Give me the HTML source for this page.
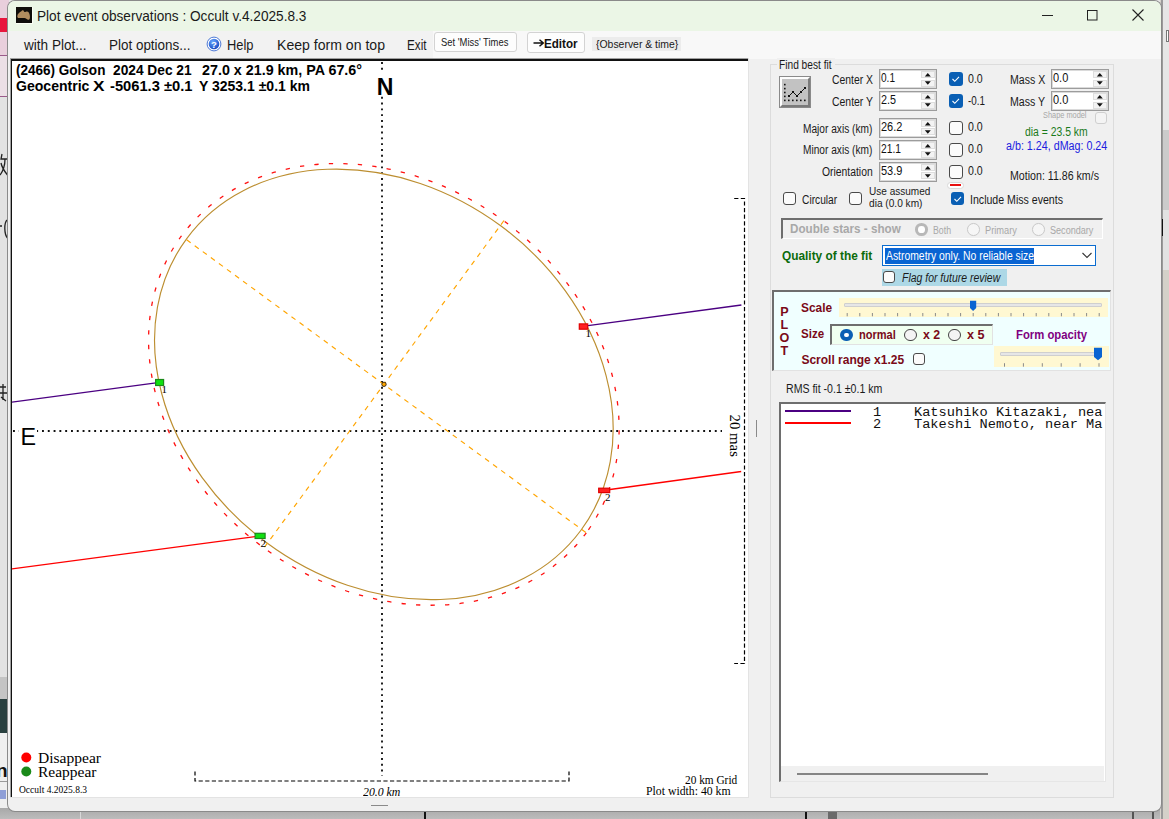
<!DOCTYPE html>
<html><head><meta charset="utf-8"><style>
html,body{margin:0;padding:0;width:1169px;height:819px;overflow:hidden;position:relative;font-family:"Liberation Sans",sans-serif}
.t{position:absolute;white-space:pre;line-height:1}
.r{position:absolute}
</style></head><body>
<div class="r" style="left:0px;top:0px;width:1169px;height:819px;background:#e6e6e6"></div>
<div class="r" style="left:0px;top:0px;width:9px;height:55px;background:#e9cfdc"></div>
<div class="r" style="left:0px;top:18px;width:8px;height:14px;background:#e8163c"></div>
<div class="r" style="left:0px;top:54.5px;width:9px;height:1.5px;background:#9a5a8a"></div>
<div class="r" style="left:0px;top:56px;width:9px;height:40px;background:#ecdfe6"></div>
<div class="r" style="left:0px;top:95.5px;width:9px;height:1.5px;background:#9a5a8a"></div>
<div class="r" style="left:0px;top:97px;width:9px;height:580px;background:#e2e2e2"></div>
<div class="r" style="left:0px;top:677px;width:9px;height:22px;background:#c4c4c4"></div>
<div class="r" style="left:0px;top:699px;width:9px;height:34px;background:#29403f"></div>
<div class="r" style="left:0px;top:733px;width:9px;height:80px;background:#efefef"></div>
<div class="t" id="t0" style="left:-4.00px;top:760.92px;font-family:'Liberation Sans', sans-serif;font-size:19px;font-weight:700;font-style:normal;color:#111;">n</div>
<div class="r" style="left:0px;top:781px;width:8px;height:1px;background:#9a9a9a"></div>
<div class="r" style="left:0px;top:790px;width:6px;height:9px;background:#3050c0;opacity:0.5"></div>
<div class="r" style="left:0px;top:808px;width:1169px;height:11px;background:linear-gradient(#a8a8a8,#bcbcbc)"></div>
<div class="r" style="left:80px;top:811px;width:1px;height:8px;background:#d8d8d8"></div>
<div class="r" style="left:424px;top:811px;width:1.5px;height:8px;background:#111"></div>
<div class="r" style="left:805px;top:811px;width:1.5px;height:8px;background:#111"></div>
<div class="r" style="left:828px;top:811px;width:9px;height:8px;background:#6a6a6a"></div>
<div class="r" style="left:1132px;top:811px;width:2px;height:8px;background:#555"></div>
<div class="r" style="left:1152px;top:811px;width:2px;height:8px;background:#555"></div>
<div class="r" style="left:1160px;top:0px;width:9px;height:819px;background:#d6d3cc"></div>
<div class="r" style="left:1161px;top:0px;width:2px;height:819px;background:#9a9a9a"></div>
<div class="r" style="left:1163px;top:0px;width:6px;height:130px;background:#e6e6e6"></div>
<div class="r" style="left:1163px;top:130px;width:6px;height:80px;background:#cbcbcb"></div>
<div class="r" style="left:1163px;top:210px;width:6px;height:60px;background:#e2e2e2"></div>
<div class="r" style="left:1163px;top:270px;width:6px;height:549px;background:#d4d1c9"></div>
<div class="r" style="left:1166px;top:30px;width:3px;height:12px;background:#fff;border:1px solid #777;box-sizing:border-box"></div>
<div class="r" style="left:1161.5px;top:219px;width:1.5px;height:17px;background:#111"></div>
<svg class="r" style="left:0;top:0" width="10" height="819"><g fill="none" stroke="#222" stroke-width="1.3"><path d="M2 154 L1 159 H7 M5 159 C5 165 3 171 0 175 M1 163 C2 168 5 172 7.5 175"/><path d="M0 226 H2 M7 220 C4 223 4 234 7.5 238"/><path d="M0 387 H6 M3 384 V400 M0 393 H7 M1 397 L6 401"/></g></svg>
<div class="r" style="left:8px;top:56px;width:1px;height:752px;background:#f4f4f4"></div>
<div class="r" style="left:9px;top:58px;width:1px;height:750px;background:#a4a4a4"></div>
<div class="r" style="left:8px;top:1px;width:1153px;height:810px;background:#f0f0f0;border-radius:7px;box-shadow:0 0 0 1px #8a8a8a;overflow:hidden">
<div class="r" style="left:0;top:0;width:1153px;height:30px;background:#ebf6e6"></div>
<div class="r" style="left:0;top:30px;width:1153px;height:28px;background:#f8f8f8"></div>
<div class="r" style="left:0;top:30px;width:425px;height:28px;background:#f2f2f2"></div>
</div>
<div class="r" style="left:15.5px;top:6.5px;width:17px;height:17px;background:#fbfff5"></div>
<div class="r" style="left:16.2px;top:7.1px;width:15.7px;height:15.7px;background:#0e0d0a"></div>
<svg class="r" style="left:16.2px;top:7.1px" width="16" height="16"><path d="M1.3 9.2 C1.3 6.8 3.8 5.2 5.4 4.2 C6 3 7.4 2.6 8 4.4 C8.6 5.2 9.6 5 10.6 4.6 C12.6 4.4 13.6 6.6 13.9 9 C14.1 11.2 13.6 13.3 12 12.7 C10.5 12.1 10 10.8 8 11 C6 11.2 4.5 10.7 3 11 C2 11.2 1.3 10.3 1.3 9.2Z" fill="#b08d5e"/></svg>
<div class="t" id="t1" style="left:37.00px;top:8.03px;font-family:'Liberation Sans', sans-serif;font-size:15.2px;font-weight:400;font-style:normal;color:#1a1a1a;transform:scaleX(0.8972);transform-origin:0 0;">Plot event observations : Occult v.4.2025.8.3</div>
<svg class="r" style="left:1030px;top:0" width="130" height="30"><line x1="12" y1="15.5" x2="23" y2="15.5" stroke="#222" stroke-width="1"/><rect x="57.5" y="10.5" width="9.5" height="9.5" fill="none" stroke="#222" stroke-width="1"/><path d="M102.5 9.5 L113.5 20.5 M113.5 9.5 L102.5 20.5" stroke="#222" stroke-width="1.1"/></svg>
<div class="t" id="t2" style="left:24.00px;top:37.74px;font-family:'Liberation Sans', sans-serif;font-size:14.6px;font-weight:400;font-style:normal;color:#1a1a1a;transform:scaleX(0.9298);transform-origin:0 0;">with Plot...</div>
<div class="t" id="t3" style="left:108.50px;top:37.74px;font-family:'Liberation Sans', sans-serif;font-size:14.6px;font-weight:400;font-style:normal;color:#1a1a1a;transform:scaleX(0.9216);transform-origin:0 0;">Plot options...</div>
<svg class="r" style="left:206px;top:36px" width="16" height="16"><defs><radialGradient id="hg" cx="40%" cy="30%" r="75%"><stop offset="0" stop-color="#6aa8ff"/><stop offset="1" stop-color="#1446c0"/></radialGradient></defs><circle cx="8" cy="8" r="6.9" fill="#fff" stroke="#3a6ad0" stroke-width="0.9"/><circle cx="8" cy="8" r="5.3" fill="url(#hg)"/><text x="8" y="11.6" font-family="Liberation Sans" font-size="9.5" font-weight="700" fill="#fff" text-anchor="middle">?</text></svg>
<div class="t" id="t4" style="left:226.50px;top:37.74px;font-family:'Liberation Sans', sans-serif;font-size:14.6px;font-weight:400;font-style:normal;color:#1a1a1a;transform:scaleX(0.8829);transform-origin:0 0;">Help</div>
<div class="t" id="t5" style="left:277.00px;top:37.74px;font-family:'Liberation Sans', sans-serif;font-size:14.6px;font-weight:400;font-style:normal;color:#1a1a1a;transform:scaleX(0.9646);transform-origin:0 0;">Keep form on top</div>
<div class="t" id="t6" style="left:406.70px;top:37.74px;font-family:'Liberation Sans', sans-serif;font-size:14.6px;font-weight:400;font-style:normal;color:#1a1a1a;transform:scaleX(0.8015);transform-origin:0 0;">Exit</div>
<div class="r" style="left:434px;top:32px;width:83px;height:20px;background:#fdfdfd;border:1px solid #d3d3d3;border-radius:3px;box-sizing:border-box"></div>
<div class="t" id="t7" style="left:441.00px;top:38.40px;font-family:'Liberation Sans', sans-serif;font-size:10.4px;font-weight:400;font-style:normal;color:#1a1a1a;transform:scaleX(0.9058);transform-origin:0 0;">Set 'Miss' Times</div>
<div class="r" style="left:527px;top:32px;width:58px;height:21px;background:#fdfdfd;border:1px solid #d3d3d3;border-radius:3px;box-sizing:border-box"></div>
<svg class="r" style="left:533px;top:38px" width="12" height="10"><path d="M0.5 5 H10 M6.5 1.8 L10.3 5 L6.5 8.2" fill="none" stroke="#111" stroke-width="1.5"/></svg>
<div class="t" id="t8" style="left:544.30px;top:37.67px;font-family:'Liberation Sans', sans-serif;font-size:12.2px;font-weight:700;font-style:normal;color:#111;transform:scaleX(0.9540);transform-origin:0 0;">Editor</div>
<div class="r" style="left:592px;top:37px;width:89px;height:14px;background:#ececec"></div>
<div class="t" id="t9" style="left:595.70px;top:39.47px;font-family:'Liberation Sans', sans-serif;font-size:11.5px;font-weight:400;font-style:normal;color:#1a1a1a;transform:scaleX(0.9067);transform-origin:0 0;">{Observer &amp; time}</div>
<div class="r" style="left:10px;top:58px;width:739px;height:740px;background:#fff;border-top:1px solid #a0a0a0;border-left:1px solid #a0a0a0;box-sizing:border-box"></div>
<div class="r" style="left:11px;top:59px;width:737px;height:2px;background:#111"></div>
<div class="r" style="left:11px;top:59px;width:1px;height:739px;background:#111"></div>
<div class="r" style="left:748px;top:58px;width:1px;height:740px;background:#e3e3e3"></div>
<div class="r" style="left:10px;top:797px;width:739px;height:1px;background:#e3e3e3"></div>
<svg class="r" style="left:0;top:0" width="1169" height="819">
<defs><clipPath id="pc"><rect x="12" y="61" width="736" height="736"/></clipPath></defs>
<g clip-path="url(#pc)">
<line x1="382" y1="62" x2="382" y2="776" stroke="#111" stroke-width="1.85" stroke-dasharray="1.9 3.9"/>
<line x1="13" y1="431" x2="722" y2="431" stroke="#111" stroke-width="1.85" stroke-dasharray="1.9 3.9"/>
<path d="M734.2 198.5 H744.5 V663.5 H734.2" fill="none" stroke="#000" stroke-width="1.2" stroke-dasharray="4.2 2.4"/>
<path d="M195 771.4 V781 H569 V771.4" fill="none" stroke="#000" stroke-width="1.2" stroke-dasharray="4.2 2.4"/>
<ellipse cx="383.85" cy="384.4" rx="251" ry="202.8" transform="rotate(36.25 383.85 384.4)" fill="none" stroke="#ff1010" stroke-width="1.3" stroke-dasharray="4.3 10.2"/>
<ellipse cx="383.85" cy="384.4" rx="245.2" ry="197" transform="rotate(36.5 383.85 384.4)" fill="none" stroke="#bc8e30" stroke-width="1.15"/>
<g stroke="#ffa500" stroke-width="1.15" stroke-dasharray="5 5"><line x1="186.64" y1="239.80" x2="585.95" y2="532.58"/><line x1="504.00" y1="220.53" x2="264.46" y2="547.22"/></g>
<line x1="12" y1="402.1" x2="156" y2="382.9" stroke="#4b0082" stroke-width="1.3"/>
<line x1="588" y1="325.6" x2="741.4" y2="305" stroke="#4b0082" stroke-width="1.3"/>
<line x1="12" y1="568.8" x2="255" y2="536.7" stroke="#ff0000" stroke-width="1.3"/>
<line x1="610" y1="489.5" x2="741.2" y2="471.5" stroke="#ff0000" stroke-width="1.3"/>
<rect x="155.6" y="379.5" width="8" height="6" fill="#10e010" stroke="#1a8a1a" stroke-width="1.2"/>
<rect x="255.1" y="533.3" width="10" height="5.2" fill="#10e010" stroke="#1a8a1a" stroke-width="1.2"/>
<rect x="579.3" y="323.9" width="8.4" height="5.3" fill="#ff2020" stroke="#e00000" stroke-width="1.2"/>
<rect x="598.7" y="488.2" width="11" height="4.4" fill="#ff2020" stroke="#e00000" stroke-width="1.2"/>
<text x="161.5" y="392.7" font-family="Liberation Serif" font-size="11" fill="#000">1</text>
<text x="585.5" y="337" font-family="Liberation Serif" font-size="11" fill="#000">1</text>
<text x="260.5" y="547" font-family="Liberation Serif" font-size="11" fill="#000">2</text>
<text x="605" y="501" font-family="Liberation Serif" font-size="11" fill="#000">2</text>
<circle cx="384" cy="384.3" r="2.2" fill="#ffa500" stroke="#111" stroke-width="0.8"/>
</g>
<rect x="375" y="71" width="20" height="25" fill="#fff"/>
<text x="0" y="0" transform="translate(376.8 94.8) scale(0.99 1)" font-family="Liberation Sans" font-weight="700" font-size="23.3" fill="#000">N</text>
<rect x="19" y="424" width="18" height="22" fill="#fff"/>
<text x="20.4" y="444.8" font-family="Liberation Sans" font-size="23.3" fill="#000">E</text>
<text transform="translate(726.5 414.6) rotate(90)" x="0" y="0" font-family="Liberation Serif" font-size="14.8" fill="#000" dominant-baseline="text-after-edge">20 mas</text>
<circle cx="26.3" cy="757.5" r="5" fill="#ff0000"/>
<circle cx="26.3" cy="771.5" r="5" fill="#1a8a1a"/>
</svg>
<div class="t" id="t10" style="left:15.60px;top:62.75px;font-family:'Liberation Sans', sans-serif;font-size:14px;font-weight:700;font-style:normal;color:#000;transform:scaleX(0.9655);transform-origin:0 0;">(2466) Golson</div>
<div class="t" id="t11" style="left:113.00px;top:62.75px;font-family:'Liberation Sans', sans-serif;font-size:14px;font-weight:700;font-style:normal;color:#000;transform:scaleX(0.9802);transform-origin:0 0;">2024 Dec 21</div>
<div class="t" id="t12" style="left:202.00px;top:62.75px;font-family:'Liberation Sans', sans-serif;font-size:14px;font-weight:700;font-style:normal;color:#000;transform:scaleX(1.0218);transform-origin:0 0;">27.0 x 21.9 km, PA 67.6°</div>
<div class="t" id="t13" style="left:15.60px;top:79.25px;font-family:'Liberation Sans', sans-serif;font-size:14px;font-weight:700;font-style:normal;color:#000;transform:scaleX(1.0035);transform-origin:0 0;">Geocentric</div>
<div class="t" id="t14" style="left:93.00px;top:79.25px;font-family:'Liberation Sans', sans-serif;font-size:14px;font-weight:700;font-style:normal;color:#000;transform:scaleX(1.2308);transform-origin:0 0;">X</div>
<div class="t" id="t15" style="left:110.00px;top:79.25px;font-family:'Liberation Sans', sans-serif;font-size:14px;font-weight:700;font-style:normal;color:#000;transform:scaleX(1.0505);transform-origin:0 0;">-5061.3 ±0.1</div>
<div class="t" id="t16" style="left:199.00px;top:79.25px;font-family:'Liberation Sans', sans-serif;font-size:14px;font-weight:700;font-style:normal;color:#000;">Y 3253.1 ±0.1 km</div>
<div class="t" id="t17" style="left:38.00px;top:750.66px;font-family:'Liberation Serif', serif;font-size:14.5px;font-weight:400;font-style:normal;color:#000;transform:scaleX(1.0718);transform-origin:0 0;">Disappear</div>
<div class="t" id="t18" style="left:38.00px;top:764.86px;font-family:'Liberation Serif', serif;font-size:14.5px;font-weight:400;font-style:normal;color:#000;transform:scaleX(1.0685);transform-origin:0 0;">Reappear</div>
<div class="t" id="t19" style="left:19.00px;top:786.04px;font-family:'Liberation Serif', serif;font-size:9.5px;font-weight:400;font-style:normal;color:#000;">Occult 4.2025.8.3</div>
<div class="t" id="t20" style="left:363.30px;top:784.51px;font-family:'Liberation Serif', serif;font-size:13px;font-weight:400;font-style:italic;color:#000;transform:scaleX(0.9084);transform-origin:0 0;">20.0 km</div>
<div class="t" id="t21" style="left:684.80px;top:774.45px;font-family:'Liberation Serif', serif;font-size:12px;font-weight:400;font-style:normal;color:#000;transform:scaleX(0.9432);transform-origin:0 0;">20 km Grid</div>
<div class="t" id="t22" style="left:645.80px;top:785.35px;font-family:'Liberation Serif', serif;font-size:12px;font-weight:400;font-style:normal;color:#000;transform:scaleX(0.9798);transform-origin:0 0;">Plot width: 40 km</div>
<div class="r" style="left:756px;top:420px;width:1px;height:17px;background:#8a8a8a"></div>
<div class="r" style="left:371px;top:805px;width:17px;height:1px;background:#8a8a8a"></div>
<div class="r" style="left:770px;top:64px;width:344px;height:734px;border:1px solid #dcdcdc;box-sizing:border-box"></div>
<div class="r" style="left:777px;top:58px;width:58px;height:10px;background:#f0f0f0"></div>
<div class="t" id="t23" style="left:779.40px;top:58.84px;font-family:'Liberation Sans', sans-serif;font-size:12px;font-weight:400;font-style:normal;color:#1a1a1a;transform:scaleX(0.8480);transform-origin:0 0;">Find best fit</div>
<div class="r" style="left:779.2px;top:76.1px;width:31.5px;height:31.5px;box-sizing:border-box;background:#c2c2c2;border:1px solid #8a8a8a"></div>
<div class="r" style="left:780.2px;top:77.1px;width:29.5px;height:29.5px;box-sizing:border-box;border-top:2.5px solid #fdfdfd;border-left:2.5px solid #fdfdfd;border-right:2.5px solid #7a7a7a;border-bottom:2.5px solid #7a7a7a"></div>
<svg class="r" style="left:0;top:0" width="1169" height="819"><g fill="#111"><rect x="784" y="83.8" width="1.6" height="1.6"/><rect x="784" y="87.8" width="1.6" height="1.6"/><rect x="784" y="91.7" width="1.6" height="1.6"/><rect x="784" y="95.6" width="1.6" height="1.6"/><rect x="784" y="99.6" width="1.6" height="1.6"/><rect x="788.0" y="99.6" width="1.6" height="1.6"/><rect x="792.0" y="99.6" width="1.6" height="1.6"/><rect x="796.0" y="99.6" width="1.6" height="1.6"/><rect x="800.0" y="99.6" width="1.6" height="1.6"/><rect x="804.0" y="99.6" width="1.6" height="1.6"/><rect x="788" y="95" width="2" height="2"/><rect x="792" y="91" width="2" height="2"/><rect x="796" y="95" width="2" height="2"/><rect x="800" y="91" width="2" height="2"/><rect x="804" y="87" width="2" height="2"/></g><path d="M789 96 L793 92 L797 96 L801 92 L805 88" fill="none" stroke="#111" stroke-width="1"/></svg>
<div class="t" id="t24" style="left:831.50px;top:74.14px;font-family:'Liberation Sans', sans-serif;font-size:12px;font-weight:400;font-style:normal;color:#1a1a1a;transform:scaleX(0.8657);transform-origin:0 0;">Center X</div>
<div class="t" id="t25" style="left:831.50px;top:96.04px;font-family:'Liberation Sans', sans-serif;font-size:12px;font-weight:400;font-style:normal;color:#1a1a1a;transform:scaleX(0.8697);transform-origin:0 0;">Center Y</div>
<div class="t" id="t26" style="left:803.20px;top:122.54px;font-family:'Liberation Sans', sans-serif;font-size:12px;font-weight:400;font-style:normal;color:#1a1a1a;transform:scaleX(0.8450);transform-origin:0 0;">Major axis (km)</div>
<div class="t" id="t27" style="left:803.20px;top:144.44px;font-family:'Liberation Sans', sans-serif;font-size:12px;font-weight:400;font-style:normal;color:#1a1a1a;transform:scaleX(0.8450);transform-origin:0 0;">Minor axis (km)</div>
<div class="t" id="t28" style="left:821.80px;top:165.94px;font-family:'Liberation Sans', sans-serif;font-size:12px;font-weight:400;font-style:normal;color:#1a1a1a;transform:scaleX(0.8637);transform-origin:0 0;">Orientation</div>
<div class="r" style="left:879px;top:69.2px;width:58px;height:19.5px;box-sizing:border-box;background:#fff;border:1px solid #9c9c9c;box-shadow:inset 0 0 0 1px #dadada"></div>
<div class="r" style="left:921px;top:71.2px;width:13.5px;height:7.3px;box-sizing:border-box;background:#f3f3f3;border:1px solid #dedede"></div>
<div class="r" style="left:921px;top:79.5px;width:13.5px;height:7px;box-sizing:border-box;background:#f3f3f3;border:1px solid #dedede"></div>
<svg class="r" style="left:921px;top:69.2px" width="14" height="19.5"><path d="M3.8 7.4 L9.8 7.4 L6.8 3.9Z M3.8 12.2 L9.8 12.2 L6.8 15.7Z" fill="#111"/></svg>
<div class="t" id="t29" style="left:881.00px;top:72.36px;font-family:'Liberation Sans', sans-serif;font-size:12.8px;font-weight:400;font-style:normal;color:#111;transform:scaleX(0.7867);transform-origin:0 0;">0.1</div>
<div class="r" style="left:879px;top:91.2px;width:58px;height:19.5px;box-sizing:border-box;background:#fff;border:1px solid #9c9c9c;box-shadow:inset 0 0 0 1px #dadada"></div>
<div class="r" style="left:921px;top:93.2px;width:13.5px;height:7.3px;box-sizing:border-box;background:#f3f3f3;border:1px solid #dedede"></div>
<div class="r" style="left:921px;top:101.5px;width:13.5px;height:7px;box-sizing:border-box;background:#f3f3f3;border:1px solid #dedede"></div>
<svg class="r" style="left:921px;top:91.2px" width="14" height="19.5"><path d="M3.8 7.4 L9.8 7.4 L6.8 3.9Z M3.8 12.2 L9.8 12.2 L6.8 15.7Z" fill="#111"/></svg>
<div class="t" id="t30" style="left:881.00px;top:94.36px;font-family:'Liberation Sans', sans-serif;font-size:12.8px;font-weight:400;font-style:normal;color:#111;transform:scaleX(0.8428);transform-origin:0 0;">2.5</div>
<div class="r" style="left:879px;top:118px;width:58px;height:19.5px;box-sizing:border-box;background:#fff;border:1px solid #9c9c9c;box-shadow:inset 0 0 0 1px #dadada"></div>
<div class="r" style="left:921px;top:120px;width:13.5px;height:7.3px;box-sizing:border-box;background:#f3f3f3;border:1px solid #dedede"></div>
<div class="r" style="left:921px;top:128.3px;width:13.5px;height:7px;box-sizing:border-box;background:#f3f3f3;border:1px solid #dedede"></div>
<svg class="r" style="left:921px;top:118px" width="14" height="19.5"><path d="M3.8 7.4 L9.8 7.4 L6.8 3.9Z M3.8 12.2 L9.8 12.2 L6.8 15.7Z" fill="#111"/></svg>
<div class="t" id="t31" style="left:881.00px;top:121.16px;font-family:'Liberation Sans', sans-serif;font-size:12.8px;font-weight:400;font-style:normal;color:#111;transform:scaleX(0.8587);transform-origin:0 0;">26.2</div>
<div class="r" style="left:879px;top:140.2px;width:58px;height:19.5px;box-sizing:border-box;background:#fff;border:1px solid #9c9c9c;box-shadow:inset 0 0 0 1px #dadada"></div>
<div class="r" style="left:921px;top:142.2px;width:13.5px;height:7.3px;box-sizing:border-box;background:#f3f3f3;border:1px solid #dedede"></div>
<div class="r" style="left:921px;top:150.5px;width:13.5px;height:7px;box-sizing:border-box;background:#f3f3f3;border:1px solid #dedede"></div>
<svg class="r" style="left:921px;top:140.2px" width="14" height="19.5"><path d="M3.8 7.4 L9.8 7.4 L6.8 3.9Z M3.8 12.2 L9.8 12.2 L6.8 15.7Z" fill="#111"/></svg>
<div class="t" id="t32" style="left:881.00px;top:143.36px;font-family:'Liberation Sans', sans-serif;font-size:12.8px;font-weight:400;font-style:normal;color:#111;transform:scaleX(0.8025);transform-origin:0 0;">21.1</div>
<div class="r" style="left:879px;top:162px;width:58px;height:19.5px;box-sizing:border-box;background:#fff;border:1px solid #9c9c9c;box-shadow:inset 0 0 0 1px #dadada"></div>
<div class="r" style="left:921px;top:164px;width:13.5px;height:7.3px;box-sizing:border-box;background:#f3f3f3;border:1px solid #dedede"></div>
<div class="r" style="left:921px;top:172.3px;width:13.5px;height:7px;box-sizing:border-box;background:#f3f3f3;border:1px solid #dedede"></div>
<svg class="r" style="left:921px;top:162px" width="14" height="19.5"><path d="M3.8 7.4 L9.8 7.4 L6.8 3.9Z M3.8 12.2 L9.8 12.2 L6.8 15.7Z" fill="#111"/></svg>
<div class="t" id="t33" style="left:881.00px;top:165.16px;font-family:'Liberation Sans', sans-serif;font-size:12.8px;font-weight:400;font-style:normal;color:#111;transform:scaleX(0.8587);transform-origin:0 0;">53.9</div>
<div class="r" style="left:949px;top:72px;width:13.5px;height:13.5px;box-sizing:border-box;background:#0a5fb4;border-radius:3px"></div>
<svg class="r" style="left:949px;top:72px" width="13.5" height="13.5"><path d="M3.5 7 L5.8 9.3 L10 4.8" fill="none" stroke="#fff" stroke-width="1.1"/></svg>
<div class="r" style="left:949px;top:94px;width:13.5px;height:13.5px;box-sizing:border-box;background:#0a5fb4;border-radius:3px"></div>
<svg class="r" style="left:949px;top:94px" width="13.5" height="13.5"><path d="M3.5 7 L5.8 9.3 L10 4.8" fill="none" stroke="#fff" stroke-width="1.1"/></svg>
<div class="r" style="left:949px;top:121px;width:13.5px;height:13.5px;box-sizing:border-box;background:#fbfbfb;border:1px solid #4a4a4a;border-radius:3px"></div>
<div class="r" style="left:949px;top:143px;width:13.5px;height:13.5px;box-sizing:border-box;background:#fbfbfb;border:1px solid #4a4a4a;border-radius:3px"></div>
<div class="r" style="left:949px;top:165px;width:13.5px;height:13.5px;box-sizing:border-box;background:#fbfbfb;border:1px solid #4a4a4a;border-radius:3px"></div>
<div class="t" id="t34" style="left:968.00px;top:72.82px;font-family:'Liberation Sans', sans-serif;font-size:12.5px;font-weight:400;font-style:normal;color:#1a1a1a;transform:scaleX(0.8453);transform-origin:0 0;">0.0</div>
<div class="t" id="t35" style="left:968.00px;top:94.62px;font-family:'Liberation Sans', sans-serif;font-size:12.5px;font-weight:400;font-style:normal;color:#1a1a1a;transform:scaleX(0.7890);transform-origin:0 0;">-0.1</div>
<div class="t" id="t36" style="left:968.00px;top:121.22px;font-family:'Liberation Sans', sans-serif;font-size:12.5px;font-weight:400;font-style:normal;color:#1a1a1a;transform:scaleX(0.8453);transform-origin:0 0;">0.0</div>
<div class="t" id="t37" style="left:968.00px;top:143.32px;font-family:'Liberation Sans', sans-serif;font-size:12.5px;font-weight:400;font-style:normal;color:#1a1a1a;transform:scaleX(0.8453);transform-origin:0 0;">0.0</div>
<div class="t" id="t38" style="left:968.00px;top:165.32px;font-family:'Liberation Sans', sans-serif;font-size:12.5px;font-weight:400;font-style:normal;color:#1a1a1a;transform:scaleX(0.8453);transform-origin:0 0;">0.0</div>
<div class="r" style="left:947px;top:182px;width:17px;height:6.5px;box-sizing:border-box;background:#fff;border:1px solid #d8d8d8;border-radius:4px"></div>
<div class="r" style="left:950px;top:184.3px;width:11px;height:2px;background:#e81010"></div>
<div class="t" id="t39" style="left:1010.00px;top:74.24px;font-family:'Liberation Sans', sans-serif;font-size:12px;font-weight:400;font-style:normal;color:#1a1a1a;transform:scaleX(0.8797);transform-origin:0 0;">Mass X</div>
<div class="t" id="t40" style="left:1010.00px;top:96.14px;font-family:'Liberation Sans', sans-serif;font-size:12px;font-weight:400;font-style:normal;color:#1a1a1a;transform:scaleX(0.8845);transform-origin:0 0;">Mass Y</div>
<div class="r" style="left:1051px;top:69.2px;width:58px;height:19.5px;box-sizing:border-box;background:#fff;border:1px solid #9c9c9c;box-shadow:inset 0 0 0 1px #dadada"></div>
<div class="r" style="left:1093px;top:71.2px;width:13.5px;height:7.3px;box-sizing:border-box;background:#f3f3f3;border:1px solid #dedede"></div>
<div class="r" style="left:1093px;top:79.5px;width:13.5px;height:7px;box-sizing:border-box;background:#f3f3f3;border:1px solid #dedede"></div>
<svg class="r" style="left:1093px;top:69.2px" width="14" height="19.5"><path d="M3.8 7.4 L9.8 7.4 L6.8 3.9Z M3.8 12.2 L9.8 12.2 L6.8 15.7Z" fill="#111"/></svg>
<div class="t" id="t41" style="left:1053.00px;top:72.36px;font-family:'Liberation Sans', sans-serif;font-size:12.8px;font-weight:400;font-style:normal;color:#111;transform:scaleX(0.8597);transform-origin:0 0;">0.0</div>
<div class="r" style="left:1051px;top:91.2px;width:58px;height:19.5px;box-sizing:border-box;background:#fff;border:1px solid #9c9c9c;box-shadow:inset 0 0 0 1px #dadada"></div>
<div class="r" style="left:1093px;top:93.2px;width:13.5px;height:7.3px;box-sizing:border-box;background:#f3f3f3;border:1px solid #dedede"></div>
<div class="r" style="left:1093px;top:101.5px;width:13.5px;height:7px;box-sizing:border-box;background:#f3f3f3;border:1px solid #dedede"></div>
<svg class="r" style="left:1093px;top:91.2px" width="14" height="19.5"><path d="M3.8 7.4 L9.8 7.4 L6.8 3.9Z M3.8 12.2 L9.8 12.2 L6.8 15.7Z" fill="#111"/></svg>
<div class="t" id="t42" style="left:1053.00px;top:94.36px;font-family:'Liberation Sans', sans-serif;font-size:12.8px;font-weight:400;font-style:normal;color:#111;transform:scaleX(0.8597);transform-origin:0 0;">0.0</div>
<div class="t" id="t43" style="left:1043.00px;top:111.38px;font-family:'Liberation Sans', sans-serif;font-size:9px;font-weight:400;font-style:normal;color:#a8a8a8;transform:scaleX(0.8200);transform-origin:0 0;">Shape model</div>
<div class="r" style="left:1094.5px;top:112px;width:12px;height:12px;box-sizing:border-box;border:1px solid #cfcfcf;border-radius:3px;background:#f4f4f4"></div>
<div class="t" id="t44" style="left:1025.20px;top:126.14px;font-family:'Liberation Sans', sans-serif;font-size:12px;font-weight:400;font-style:normal;color:#1a7a1a;transform:scaleX(0.8663);transform-origin:0 0;">dia = 23.5 km</div>
<div class="t" id="t45" style="left:1006.20px;top:140.34px;font-family:'Liberation Sans', sans-serif;font-size:12px;font-weight:400;font-style:normal;color:#2020e0;transform:scaleX(0.8931);transform-origin:0 0;">a/b: 1.24, dMag: 0.24</div>
<div class="t" id="t46" style="left:1010.00px;top:170.14px;font-family:'Liberation Sans', sans-serif;font-size:12px;font-weight:400;font-style:normal;color:#1a1a1a;transform:scaleX(0.8856);transform-origin:0 0;">Motion: 11.86 km/s</div>
<div class="r" style="left:783.3px;top:192px;width:13px;height:13px;box-sizing:border-box;background:#fbfbfb;border:1px solid #4a4a4a;border-radius:3px"></div>
<div class="t" id="t47" style="left:801.60px;top:193.64px;font-family:'Liberation Sans', sans-serif;font-size:12px;font-weight:400;font-style:normal;color:#1a1a1a;transform:scaleX(0.8514);transform-origin:0 0;">Circular</div>
<div class="r" style="left:849px;top:192px;width:13px;height:13px;box-sizing:border-box;background:#fbfbfb;border:1px solid #4a4a4a;border-radius:3px"></div>
<div class="t" id="t48" style="left:868.60px;top:186.07px;font-family:'Liberation Sans', sans-serif;font-size:11.5px;font-weight:400;font-style:normal;color:#1a1a1a;transform:scaleX(0.8732);transform-origin:0 0;">Use assumed</div>
<div class="t" id="t49" style="left:868.60px;top:198.47px;font-family:'Liberation Sans', sans-serif;font-size:11.5px;font-weight:400;font-style:normal;color:#1a1a1a;transform:scaleX(0.8811);transform-origin:0 0;">dia (0.0 km)</div>
<div class="r" style="left:951px;top:192px;width:13px;height:13px;box-sizing:border-box;background:#0a5fb4;border-radius:3px"></div>
<svg class="r" style="left:951px;top:192px" width="13" height="13"><path d="M3.5 7 L5.8 9.3 L10 4.8" fill="none" stroke="#fff" stroke-width="1.1"/></svg>
<div class="t" id="t50" style="left:970.40px;top:193.64px;font-family:'Liberation Sans', sans-serif;font-size:12px;font-weight:400;font-style:normal;color:#1a1a1a;transform:scaleX(0.8824);transform-origin:0 0;">Include Miss events</div>
<div class="r" style="left:781px;top:218px;width:322px;height:21px;box-sizing:border-box;border-top:2px solid #6e6e6e;border-left:2px solid #6e6e6e;border-bottom:1px solid #fff;border-right:1px solid #fff"></div>
<div class="t" id="t51" style="left:789.70px;top:222.64px;font-family:'Liberation Sans', sans-serif;font-size:12px;font-weight:700;font-style:normal;color:#a8a8a8;transform:scaleX(0.9708);transform-origin:0 0;">Double stars - show</div>
<div class="r" style="left:915px;top:223.3px;width:12.7px;height:12.7px;box-sizing:border-box;border-radius:50%;background:#fff;border:3.5px solid #b8b8b8"></div>
<div class="t" id="t52" style="left:933.40px;top:225.53px;font-family:'Liberation Sans', sans-serif;font-size:10px;font-weight:400;font-style:normal;color:#a8a8a8;transform:scaleX(0.8747);transform-origin:0 0;">Both</div>
<div class="r" style="left:967.2px;top:223.3px;width:12.7px;height:12.7px;box-sizing:border-box;border-radius:50%;background:#f6f6f6;border:1px solid #c8c8c8"></div>
<div class="t" id="t53" style="left:985.00px;top:225.53px;font-family:'Liberation Sans', sans-serif;font-size:10px;font-weight:400;font-style:normal;color:#a8a8a8;transform:scaleX(0.9259);transform-origin:0 0;">Primary</div>
<div class="r" style="left:1032px;top:223.3px;width:12.7px;height:12.7px;box-sizing:border-box;border-radius:50%;background:#f6f6f6;border:1px solid #c8c8c8"></div>
<div class="t" id="t54" style="left:1050.30px;top:225.53px;font-family:'Liberation Sans', sans-serif;font-size:10px;font-weight:400;font-style:normal;color:#a8a8a8;transform:scaleX(0.9077);transform-origin:0 0;">Secondary</div>
<div class="t" id="t55" style="left:782.00px;top:249.84px;font-family:'Liberation Sans', sans-serif;font-size:12px;font-weight:700;font-style:normal;color:#0b6b0b;transform:scaleX(0.9886);transform-origin:0 0;">Quality of the fit</div>
<div class="r" style="left:882px;top:245px;width:214px;height:21px;box-sizing:border-box;background:#fff;border:1px solid #0a6cd0"></div>
<div class="r" style="left:884.5px;top:247.5px;width:149.5px;height:16px;background:#0a64d2"></div>
<div class="t" id="t56" style="left:885.50px;top:249.84px;font-family:'Liberation Sans', sans-serif;font-size:12px;font-weight:400;font-style:normal;color:#fff;transform:scaleX(0.8646);transform-origin:0 0;">Astrometry only. No reliable size</div>
<svg class="r" style="left:1081px;top:250px" width="12" height="10"><path d="M1.5 3 L6 7.5 L10.5 3" fill="none" stroke="#333" stroke-width="1.1"/></svg>
<div class="r" style="left:882px;top:269px;width:125px;height:16.5px;background:#add8e6"></div>
<div class="r" style="left:882.5px;top:270.7px;width:12.2px;height:12.2px;box-sizing:border-box;background:#fbfbfb;border:1px solid #4a4a4a;border-radius:3px"></div>
<div class="t" id="t57" style="left:902.00px;top:271.84px;font-family:'Liberation Sans', sans-serif;font-size:12px;font-weight:400;font-style:italic;color:#1a1a1a;transform:scaleX(0.8712);transform-origin:0 0;">Flag for future review</div>
<div class="r" style="left:772px;top:289.5px;width:339px;height:81px;box-sizing:border-box;background:#f0ffff;border-top:2px solid #6e6e6e;border-left:2px solid #6e6e6e;border-bottom:1px solid #e2e2e2;border-right:1px solid #e2e2e2"></div>
<div class="t" id="t58" style="left:780.20px;top:306.23px;font-family:'Liberation Sans', sans-serif;font-size:12.6px;font-weight:700;font-style:normal;color:#7a0a18;">P</div>
<div class="t" id="t59" style="left:780.55px;top:319.16px;font-family:'Liberation Sans', sans-serif;font-size:12.6px;font-weight:700;font-style:normal;color:#7a0a18;">L</div>
<div class="t" id="t60" style="left:779.50px;top:332.09px;font-family:'Liberation Sans', sans-serif;font-size:12.6px;font-weight:700;font-style:normal;color:#7a0a18;">O</div>
<div class="t" id="t61" style="left:780.55px;top:345.02px;font-family:'Liberation Sans', sans-serif;font-size:12.6px;font-weight:700;font-style:normal;color:#7a0a18;">T</div>
<div class="t" id="t62" style="left:800.50px;top:301.84px;font-family:'Liberation Sans', sans-serif;font-size:12px;font-weight:700;font-style:normal;color:#7a0a18;transform:scaleX(0.9917);transform-origin:0 0;">Scale</div>
<div class="r" style="left:839px;top:298.3px;width:269px;height:18.4px;background:#fff8d2"></div>
<div class="r" style="left:844px;top:303.3px;width:258px;height:3.6px;box-sizing:border-box;background:#e6e6e6;border:1px solid #cfcfcf;border-radius:1px"></div>
<svg class="r" style="left:0;top:0" width="1169" height="819"><g stroke="#8a8a8a" stroke-width="1"><line x1="847.2" y1="313" x2="847.2" y2="316.3" /><line x1="859.8" y1="313" x2="859.8" y2="316.3" /><line x1="872.4" y1="313" x2="872.4" y2="316.3" /><line x1="885.0" y1="313" x2="885.0" y2="316.3" /><line x1="897.6" y1="313" x2="897.6" y2="316.3" /><line x1="910.2" y1="313" x2="910.2" y2="316.3" /><line x1="922.8" y1="313" x2="922.8" y2="316.3" /><line x1="935.4" y1="313" x2="935.4" y2="316.3" /><line x1="948.0" y1="313" x2="948.0" y2="316.3" /><line x1="960.6" y1="313" x2="960.6" y2="316.3" /><line x1="973.2" y1="313" x2="973.2" y2="316.3" /><line x1="985.8" y1="313" x2="985.8" y2="316.3" /><line x1="998.4" y1="313" x2="998.4" y2="316.3" /><line x1="1011.0" y1="313" x2="1011.0" y2="316.3" /><line x1="1023.6" y1="313" x2="1023.6" y2="316.3" /><line x1="1036.2" y1="313" x2="1036.2" y2="316.3" /><line x1="1048.8" y1="313" x2="1048.8" y2="316.3" /><line x1="1061.4" y1="313" x2="1061.4" y2="316.3" /><line x1="1074.0" y1="313" x2="1074.0" y2="316.3" /><line x1="1086.6" y1="313" x2="1086.6" y2="316.3" /><line x1="1099.2" y1="313" x2="1099.2" y2="316.3" /></g><path d="M970 300.7 H976.2 V308 L973.1 311 L970 308Z" fill="#0a64d2"/></svg>
<div class="t" id="t63" style="left:800.50px;top:327.84px;font-family:'Liberation Sans', sans-serif;font-size:12px;font-weight:700;font-style:normal;color:#7a0a18;transform:scaleX(0.9619);transform-origin:0 0;">Size</div>
<div class="r" style="left:830.4px;top:323.5px;width:162.2px;height:21.9px;box-sizing:border-box;background:#f0fff0;border-top:2px solid #6e6e6e;border-left:2px solid #6e6e6e;border-bottom:1px solid #e2e2e2;border-right:1px solid #e2e2e2"></div>
<div class="r" style="left:839.9px;top:328.6px;width:12.8px;height:12.8px;box-sizing:border-box;border-radius:50%;background:#fff;border:4.4px solid #0a5fb4"></div>
<div class="t" id="t64" style="left:858.70px;top:328.84px;font-family:'Liberation Sans', sans-serif;font-size:12px;font-weight:700;font-style:normal;color:#7a0a18;transform:scaleX(0.9196);transform-origin:0 0;">normal</div>
<div class="r" style="left:904px;top:328.6px;width:12.8px;height:12.8px;box-sizing:border-box;border-radius:50%;background:#f4f4f4;border:1px solid #444"></div>
<div class="t" id="t65" style="left:922.80px;top:328.84px;font-family:'Liberation Sans', sans-serif;font-size:12px;font-weight:700;font-style:normal;color:#7a0a18;transform:scaleX(1.0307);transform-origin:0 0;">x 2</div>
<div class="r" style="left:948px;top:328.6px;width:12.8px;height:12.8px;box-sizing:border-box;border-radius:50%;background:#f4f4f4;border:1px solid #444"></div>
<div class="t" id="t66" style="left:966.70px;top:328.84px;font-family:'Liberation Sans', sans-serif;font-size:12px;font-weight:700;font-style:normal;color:#7a0a18;transform:scaleX(1.0487);transform-origin:0 0;">x 5</div>
<div class="t" id="t67" style="left:1015.70px;top:328.84px;font-family:'Liberation Sans', sans-serif;font-size:12px;font-weight:700;font-style:normal;color:#800080;transform:scaleX(0.9422);transform-origin:0 0;">Form opacity</div>
<div class="r" style="left:994px;top:346px;width:114.5px;height:20.7px;background:#fff8d2"></div>
<div class="r" style="left:1000.2px;top:352.2px;width:101.8px;height:3.8px;box-sizing:border-box;background:#e6e6e6;border:1px solid #cfcfcf;border-radius:1px"></div>
<svg class="r" style="left:0;top:0" width="1169" height="819"><g stroke="#8a8a8a" stroke-width="1"><line x1="1004.5" y1="363.2" x2="1004.5" y2="366.7" /><line x1="1023.4" y1="363.2" x2="1023.4" y2="366.7" /><line x1="1042.3" y1="363.2" x2="1042.3" y2="366.7" /><line x1="1061.2" y1="363.2" x2="1061.2" y2="366.7" /><line x1="1080.1" y1="363.2" x2="1080.1" y2="366.7" /><line x1="1099.0" y1="363.2" x2="1099.0" y2="366.7" /></g><path d="M1094 347.8 H1102 V357 L1098 360.3 L1094 357Z" fill="#0a64d2"/></svg>
<div class="t" id="t68" style="left:801.40px;top:353.84px;font-family:'Liberation Sans', sans-serif;font-size:12px;font-weight:700;font-style:normal;color:#7a0a18;">Scroll range x1.25</div>
<div class="r" style="left:912.6px;top:353.4px;width:12px;height:12px;box-sizing:border-box;background:#fbfbfb;border:1px solid #4a4a4a;border-radius:3px"></div>
<div class="t" id="t69" style="left:786.00px;top:382.64px;font-family:'Liberation Sans', sans-serif;font-size:12px;font-weight:400;font-style:normal;color:#1a1a1a;transform:scaleX(0.8812);transform-origin:0 0;">RMS fit -0.1 ±0.1 km</div>
<div class="r" style="left:778.6px;top:402.2px;width:327px;height:380px;box-sizing:border-box;background:#fff;border-top:2px solid #6e6e6e;border-left:2px solid #6e6e6e;border-bottom:1px solid #e6e6e6;border-right:1px solid #e6e6e6;overflow:hidden"></div>
<div class="r" style="left:785px;top:409.7px;width:66px;height:2.2px;background:#4b0082"></div>
<div class="r" style="left:785px;top:421.7px;width:66px;height:2.2px;background:#ff0000"></div>
<div class="r" style="left:0;top:0;width:1104.5px;height:819px;overflow:hidden">
<div class="t" id="t70" style="left:873.00px;top:406.32px;font-family:'Liberation Mono', monospace;font-size:13.67px;font-weight:400;font-style:normal;color:#111;">1    Katsuhiko Kitazaki, nea</div>
<div class="t" id="t71" style="left:873.00px;top:418.22px;font-family:'Liberation Mono', monospace;font-size:13.67px;font-weight:400;font-style:normal;color:#111;">2    Takeshi Nemoto, near Ma</div>
</div>
<div class="r" style="left:780.6px;top:765.8px;width:323.5px;height:15.4px;background:#f0f0f0"></div>
<div class="r" style="left:797.2px;top:772.8px;width:190.8px;height:2px;background:#858585"></div>
</body></html>
